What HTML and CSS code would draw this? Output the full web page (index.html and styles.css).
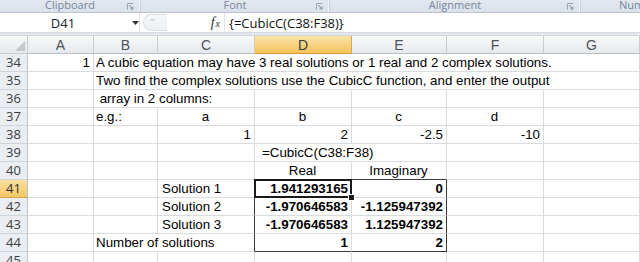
FILE: index.html
```html
<!DOCTYPE html>
<html>
<head>
<meta charset="utf-8">
<link rel="stylesheet" href="styles.css">
</head>
<body>
<div class="app">
  <div class="ribbon">
    <div class="rgroup g-clip"><span class="rlabel">Clipboard</span><span class="launch"><svg width="7" height="7" viewBox="0 0 7 7"><path d="M0.5 6.5V0.5M0.5 0.5H6.5" stroke="#9aa6b5" fill="none"/><path d="M2 2L6 6M6 3.5V6H3.5" stroke="#7f8b9b" fill="none"/></svg></span></div>
    <div class="rgroup g-font"><span class="rlabel">Font</span><span class="launch"><svg width="7" height="7" viewBox="0 0 7 7"><path d="M0.5 6.5V0.5M0.5 0.5H6.5" stroke="#9aa6b5" fill="none"/><path d="M2 2L6 6M6 3.5V6H3.5" stroke="#7f8b9b" fill="none"/></svg></span></div>
    <div class="rgroup g-align"><span class="rlabel">Alignment</span><span class="launch"><svg width="7" height="7" viewBox="0 0 7 7"><path d="M0.5 6.5V0.5M0.5 0.5H6.5" stroke="#9aa6b5" fill="none"/><path d="M2 2L6 6M6 3.5V6H3.5" stroke="#7f8b9b" fill="none"/></svg></span></div>
    <div class="rgroup g-num"><span class="rlabel">Number</span></div>
  </div>
  <div class="fbar">
    <div class="namebox">
      <span class="name">D41</span>
      <svg class="dd" width="7" height="4" viewBox="0 0 7 4"><path d="M0 0H7L3.5 4Z" fill="#333"/></svg>
    </div>
    <div class="grip"><span class="gripdot"></span></div>
    <div class="fx"><i>f</i><span class="fxx">x</span></div>
    <div class="formula">{=CubicC(C38:F38)}</div>
  </div>
  <div class="band"></div>
  <div class="sheet">
    <div class="corner"><svg width="10" height="10" viewBox="0 0 10 10"><path d="M10 0V10H0Z" fill="#c3c7cc"/></svg></div>
    <div class="ch">A</div><div class="ch">B</div><div class="ch">C</div><div class="ch ch-sel">D</div><div class="ch">E</div><div class="ch">F</div><div class="ch">G</div>

    <div class="rh">34</div>
    <div class="c r">1</div>
    <div class="c s6">A cubic equation may have 3 real solutions or 1 real and 2 complex solutions.</div>

    <div class="rh">35</div>
    <div class="c"></div>
    <div class="c s6">Two find the complex solutions use the CubicC function, and enter the output</div>

    <div class="rh">36</div>
    <div class="c"></div>
    <div class="c s2">&nbsp;array in 2 columns:</div>
    <div class="c"></div><div class="c"></div><div class="c"></div><div class="c"></div>

    <div class="rh">37</div>
    <div class="c"></div>
    <div class="c">e.g.:</div>
    <div class="c m">a</div><div class="c m">b</div><div class="c m">c</div><div class="c m">d</div>
    <div class="c"></div>

    <div class="rh">38</div>
    <div class="c"></div><div class="c"></div>
    <div class="c r">1</div><div class="c r">2</div><div class="c r">-2.5</div><div class="c r">-10</div>
    <div class="c"></div>

    <div class="rh">39</div>
    <div class="c"></div><div class="c"></div><div class="c"></div>
    <div class="c s2 ind">=CubicC(C38:F38)</div>
    <div class="c"></div><div class="c"></div>

    <div class="rh">40</div>
    <div class="c"></div><div class="c"></div><div class="c"></div>
    <div class="c m bb">Real</div><div class="c m bb">Imaginary</div>
    <div class="c"></div><div class="c"></div>

    <div class="rh rh-sel">41</div>
    <div class="c"></div><div class="c"></div>
    <div class="c br ind2">Solution 1</div>
    <div class="c r b sel">1.941293165<span class="handle"></span></div>
    <div class="c r b br">0</div>
    <div class="c"></div><div class="c"></div>

    <div class="rh">42</div>
    <div class="c"></div><div class="c"></div>
    <div class="c br ind2">Solution 2</div>
    <div class="c r b">-1.970646583</div>
    <div class="c r b br">-1.125947392</div>
    <div class="c"></div><div class="c"></div>

    <div class="rh">43</div>
    <div class="c"></div><div class="c"></div>
    <div class="c br ind2">Solution 3</div>
    <div class="c r b">-1.970646583</div>
    <div class="c r b br">1.125947392</div>
    <div class="c"></div><div class="c"></div>

    <div class="rh">44</div>
    <div class="c"></div>
    <div class="c s2 br">Number of solutions</div>
    <div class="c r b bb">1</div>
    <div class="c r b bb br">2</div>
    <div class="c"></div><div class="c"></div>

    <div class="rh">45</div>
    <div class="c"></div><div class="c"></div><div class="c"></div><div class="c"></div><div class="c"></div><div class="c"></div><div class="c"></div>
  </div>
</div>
</body>
</html>
```

FILE: styles.css
```css
html, body {
  margin: 0;
  padding: 0;
  background: #ffffff;
}
.app {
  width: 640px;
  height: 262px;
  overflow: hidden;
  font-family: "Liberation Sans", Arial, sans-serif;
}

/* ribbon group labels */
.ribbon {
  height: 12px;
  display: flex;
  background: linear-gradient(#e3e8ef, #dbe2eb);
  border-bottom: 1px solid #b9c3cf;
  overflow: hidden;
}
.rgroup {
  position: relative;
  display: flex;
  justify-content: center;
  align-items: flex-end;
  border-right: 1px solid #c3ccd7;
  box-shadow: inset -1px 0 0 #f4f6f9;
  flex: none;
}
.g-clip { width: 140px; }
.g-font { width: 188px; }
.g-align { width: 250px; }
.g-num { flex: 1; border-right: none; box-shadow: none; justify-content: flex-start; padding-left: 38px; }
.rlabel {
  font-family: "Open Sans", "Liberation Sans", sans-serif;
  font-size: 11px;
  line-height: 14px;
  color: #76859a;
  margin-bottom: 0;
}
.launch {
  position: absolute;
  right: 6px;
  top: 3px;
  width: 7px;
  height: 7px;
  display: flex;
}

/* formula bar */
.fbar {
  height: 19px;
  display: flex;
  align-items: center;
  background: #ffffff;
  border-bottom: 1px solid #d5dae1;
}
.namebox {
  width: 140px;
  height: 19px;
  display: flex;
  align-items: center;
  flex: none;
  border-right: 1px solid #e2e6eb;
  box-sizing: border-box;
}
.name {
  width: 126px;
  text-align: center;
  font-family: "Open Sans", "Liberation Sans", sans-serif;
  font-size: 13px;
  color: #222;
}
.dd { margin-left: 6px; }
.grip {
  width: 24px;
  height: 17px;
  margin-left: 3px;
  border: 1px solid #d8dde3;
  border-right: none;
  border-radius: 9px 0 0 9px;
  background: linear-gradient(#f6f7f9, #eceff2);
  box-sizing: border-box;
  display: flex;
  align-items: center;
  padding-left: 6px;
  flex: none;
}
.gripdot {
  width: 5px;
  height: 3px;
  border-top: 1px solid #b9bfc7;
  border-radius: 3px 3px 0 0;
  margin-top: -4px;
}
.fx {
  width: 58px;
  flex: none;
  display: flex;
  justify-content: flex-end;
  align-items: baseline;
  padding-right: 4px;
  box-sizing: border-box;
  height: 19px;
  line-height: 19px;
  border-right: 1px solid #e0e4e9;
  font-family: "Liberation Serif", serif;
  color: #333;
}
.fx i { font-size: 14px; font-style: italic; }
.fxx { font-size: 10px; font-style: italic; margin-left: 1px; }
.formula {
  padding-left: 4px;
  font-family: "Open Sans", "Liberation Sans", sans-serif;
  font-size: 13px;
  color: #111;
  white-space: nowrap;
}
.band {
  height: 2px;
  background: #e4e8ed;
  border-bottom: 1px solid #cfd4da;
}

/* sheet grid */
.sheet {
  display: grid;
  grid-template-columns: 28px 66px 64px 97px 97px 95px 97px 96px;
  grid-auto-rows: 18px;
  font-size: 13.33px;
  color: #000;
}
.corner, .ch, .rh, .c {
  box-sizing: border-box;
  border-right: 1px solid #d9dbde;
  border-bottom: 1px solid #d9dbde;
}
.corner {
  background: linear-gradient(#f6f7f8, #e6e9ec);
  border-color: #c8ccd1;
  display: flex;
  align-items: flex-end;
  justify-content: flex-end;
  padding: 0 2px 2px 0;
}
.ch {
  background: linear-gradient(#f8f9fa, #e6e9ed);
  border-right: 1px solid #c6cbd1;
  border-bottom: 1px solid #b8bec6;
  display: flex;
  align-items: center;
  justify-content: center;
  font-size: 14px;
  color: #4e5257;
}
.ch-sel {
  background: linear-gradient(#fbe3a8, #f2c35c);
  border-right-color: #e0a83c;
  border-bottom-color: #d79a2e;
  color: #3b3b3b;
}
.rh {
  background: #eaedf1;
  border-right: 1px solid #bcc2ca;
  border-bottom: 1px solid #d0d5dc;
  display: flex;
  align-items: flex-end;
  justify-content: center;
  font-family: "Open Sans", "Liberation Sans", sans-serif;
  font-size: 13px;
  line-height: 17px;
  color: #3d3f43;
}
.rh-sel {
  background: linear-gradient(#fbe0a0, #f3c663);
  border-bottom-color: #dca54a;
  color: #2e2e2e;
}
.c {
  display: flex;
  align-items: flex-end;
  padding: 0 3px 1px 2px;
  line-height: 15px;
  white-space: nowrap;
  min-width: 0;
}
.r { justify-content: flex-end; }
.m { justify-content: center; }
.b { font-weight: bold; }
.ind { padding-left: 7px; }
.ind2 { padding-left: 4px; }
.s2 { grid-column: span 2; }
.s6 { grid-column: span 6; }
.bb { border-bottom-color: #3a3a3a; }
.br { border-right-color: #3a3a3a; }
.sel {
  position: relative;
}
.sel::after {
  content: "";
  position: absolute;
  left: -1px;
  top: -1px;
  right: -1px;
  bottom: -1px;
  border: 2px solid #1a1a1a;
}
.handle {
  position: absolute;
  right: -4px;
  bottom: -4px;
  width: 5px;
  height: 5px;
  background: #1a1a1a;
  border: 1px solid #ffffff;
  z-index: 2;
}
```
